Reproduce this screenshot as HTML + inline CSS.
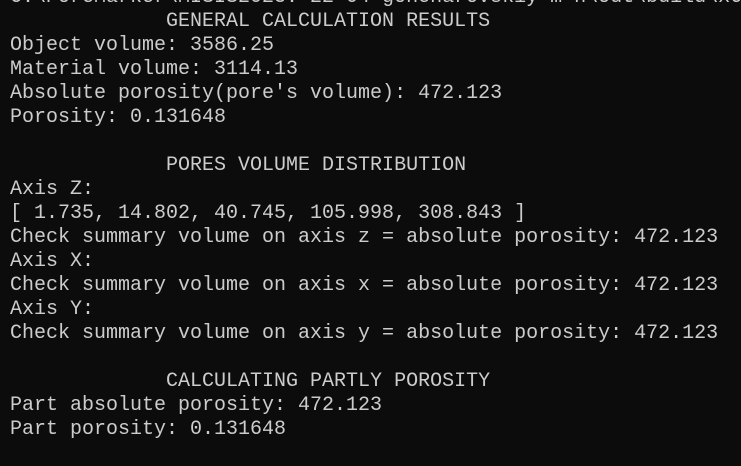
<!DOCTYPE html>
<html><head><meta charset="utf-8"><style>
html,body{margin:0;padding:0;background:#0c0c0c;width:741px;height:466px;overflow:hidden}
pre{margin:0;position:absolute;left:10px;top:-14px;font-family:"Liberation Mono",monospace;font-size:20px;line-height:24px;color:#cccccc;white-space:pre}
</style></head><body><pre>C:\PoreMarker\MISIS2023: 22-04 goncharovskiy m n\out\build\x64
             GENERAL CALCULATION RESULTS
Object volume: 3586.25
Material volume: 3114.13
Absolute porosity(pore's volume): 472.123
Porosity: 0.131648

             PORES VOLUME DISTRIBUTION
Axis Z:
[ 1.735, 14.802, 40.745, 105.998, 308.843 ]
Check summary volume on axis z = absolute porosity: 472.123
Axis X:
Check summary volume on axis x = absolute porosity: 472.123
Axis Y:
Check summary volume on axis y = absolute porosity: 472.123

             CALCULATING PARTLY POROSITY
Part absolute porosity: 472.123
Part porosity: 0.131648</pre></body></html>
